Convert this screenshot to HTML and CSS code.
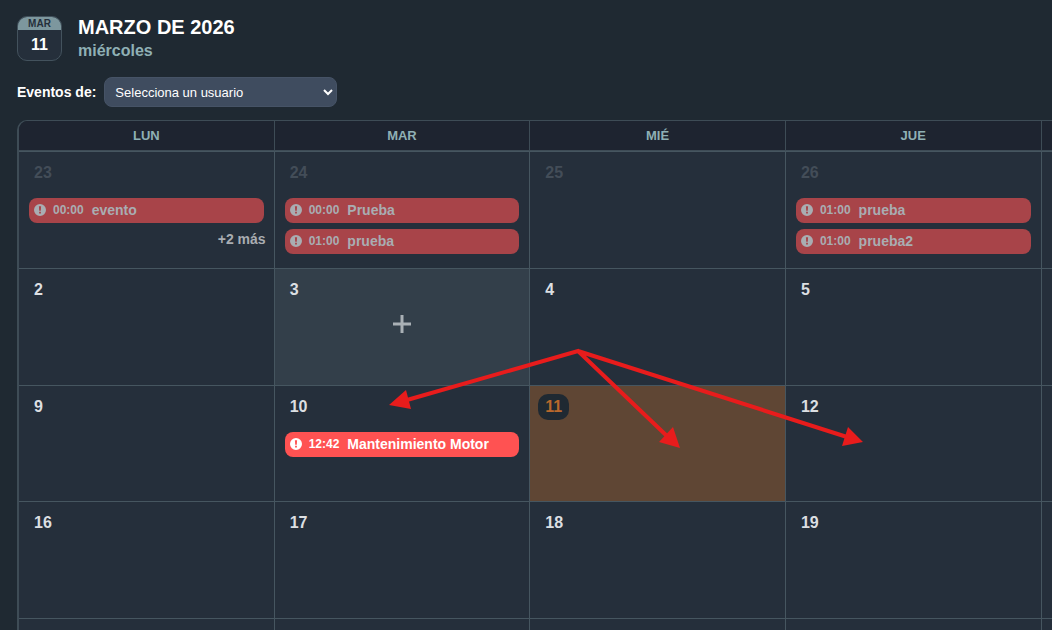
FILE: index.html
```
<!DOCTYPE html>
<html lang="es">
<head>
    <meta charset="UTF-8">
    <meta name="viewport" content="width=device-width, initial-scale=1.0">
    <title>Calendario de eventos</title>
    <link rel="stylesheet" href="styles.css">
</head>
<body>
    <svg class="sprite" aria-hidden="true">
        <symbol id="alert" viewBox="0 0 12 12">
            <path fill-rule="evenodd" d="M6 0a6 6 0 1 1 0 12A6 6 0 0 1 6 0zM4.9 2.2l.3 4.6h1.6l.3-4.6zM5.1 7.8v1.8h1.8V7.8z"/>
        </symbol>
    </svg>

    <header class="page-header">
        <div class="date-badge">
            <span class="badge-month">MAR</span>
            <span class="badge-day">11</span>
        </div>
        <div>
            <h1>MARZO DE 2026</h1>
            <p class="weekday">miércoles</p>
        </div>
    </header>

    <form class="filter">
        <label for="user">Eventos de:</label>
        <select id="user" name="user">
            <option value="">Selecciona un usuario</option>
        </select>
    </form>

    <div class="calendar">
        <table>
            <thead>
                <tr><th>LUN</th><th>MAR</th><th>MIÉ</th><th>JUE</th><th></th></tr>
            </thead>
            <tbody>
                <tr>
                    <td class="other-month">
                        <span class="day">23</span>
                        <button class="event"><svg><use href="#alert"/></svg><span class="event-time">00:00</span><span>evento</span></button>
                        <button class="more">+2 más</button>
                    </td>
                    <td class="other-month">
                        <span class="day">24</span>
                        <button class="event"><svg><use href="#alert"/></svg><span class="event-time">00:00</span><span>Prueba</span></button>
                        <button class="event"><svg><use href="#alert"/></svg><span class="event-time">01:00</span><span>prueba</span></button>
                    </td>
                    <td class="other-month"><span class="day">25</span></td>
                    <td class="other-month">
                        <span class="day">26</span>
                        <button class="event"><svg><use href="#alert"/></svg><span class="event-time">01:00</span><span>prueba</span></button>
                        <button class="event"><svg><use href="#alert"/></svg><span class="event-time">01:00</span><span>prueba2</span></button>
                    </td>
                    <td></td>
                </tr>
                <tr>
                    <td><span class="day">2</span></td>
                    <td class="active">
                        <span class="day">3</span>
                        <button class="add" aria-label="Añadir evento">
                            <svg viewBox="0 0 18 18"><path d="M9 0v18M0 9h18"/></svg>
                        </button>
                    </td>
                    <td><span class="day">4</span></td>
                    <td><span class="day">5</span></td>
                    <td></td>
                </tr>
                <tr>
                    <td><span class="day">9</span></td>
                    <td>
                        <span class="day">10</span>
                        <button class="event"><svg><use href="#alert"/></svg><span class="event-time">12:42</span><span>Mantenimiento Motor</span></button>
                    </td>
                    <td class="today"><span class="day">11</span></td>
                    <td><span class="day">12</span></td>
                    <td></td>
                </tr>
                <tr>
                    <td><span class="day">16</span></td>
                    <td><span class="day">17</span></td>
                    <td><span class="day">18</span></td>
                    <td><span class="day">19</span></td>
                    <td></td>
                </tr>
                <tr><td></td><td></td><td></td><td></td><td></td></tr>
            </tbody>
        </table>
    </div>

    <!-- Annotation arrows -->
    <svg class="arrows" viewBox="0 0 1052 630" aria-hidden="true">
        <path class="arrow-line" d="M407 400L578 351L668 437M578 351L847 437"/>
        <path class="arrow-head" d="M389 405l17-15 5 19zM680 448l-7-21-14 15zM863 442l-15-15-6 19z"/>
    </svg>
</body>
</html>
```
FILE: styles.css
```
* {
    box-sizing: border-box;
}

body {
    position: relative;
    margin: 0;
    padding: 16px 0 0 17px;
    height: 100vh;
    overflow: hidden;
    background: #1f2932;
    color: #fff;
    font-family: "Liberation Sans", Arial, sans-serif;
    font-size: 14px;
}

button {
    border: none;
    background: none;
    font: inherit;
    font-weight: bold;
    cursor: pointer;
}

.sprite {
    display: none;
}

/* Header */
.page-header {
    display: flex;
    align-items: flex-start;
    gap: 16px;
    height: 45px;
    font-weight: bold;
}

.date-badge {
    display: flex;
    flex-direction: column;
    width: 45px;
    height: 45px;
    border: 1px solid #43525d;
    border-radius: 10px;
    background: #252f3b;
    overflow: hidden;
    text-align: center;
}

.badge-month {
    background: #7d979e;
    color: #252f3b;
    font-size: 10px;
    line-height: 13px;
}

.badge-day {
    font-size: 16px;
    line-height: 30px;
}

h1 {
    margin: 0;
    font-size: 20px;
    line-height: 22px;
}

.weekday {
    margin: 0;
    color: #8fb0b5;
    font-size: 16px;
    line-height: 26px;
}

/* User filter */
.filter {
    display: flex;
    align-items: center;
    gap: 8px;
    margin: 16px 0 13px;
}

.filter label {
    font-weight: bold;
}

select {
    width: 233px;
    height: 30px;
    padding: 0 0 0 6px;
    border: 1px solid #465366;
    border-radius: 8px;
    background: #3f4c5f;
    color: #fff;
    font-family: inherit;
    font-size: 13px;
}

/* Calendar */
.calendar {
    width: 123vw;
    border: 1px solid #3e4c56;
    border-left-width: 2px;
    border-right: none;
    border-radius: 10px 0 0 0;
    overflow: hidden;
}

table {
    width: 121.5vw;
    table-layout: fixed;
    border-collapse: separate;
    border-spacing: 0;
}

th {
    height: 30px;
    padding: 0;
    border-right: 1px solid #3e4c56;
    border-bottom: 1px solid #3e4c56;
    background: #1e2430;
    color: #8fb0b5;
    font-size: 13px;
}

td {
    height: 18.5vh;
    padding: 8px;
    border-top: 1px solid #465660;
    border-right: 1px solid #465660;
    background: #252f3b;
    vertical-align: top;
}

.day {
    display: block;
    width: fit-content;
    margin-bottom: 12px;
    padding: 0 7px;
    border-radius: 10px;
    color: #dcdfe2;
    font-size: 16px;
    font-weight: bold;
    line-height: 26px;
}

.active {
    background: #333f4a;
}

.today {
    background: #5f4634;
}

.today .day {
    background: #1f2932;
    color: #b8682c;
}

.event {
    display: flex;
    align-items: center;
    width: calc(100% - 4px);
    height: 25px;
    margin: 0 2px 6px;
    padding: 0 5px 1px;
    border-radius: 8px;
    background: #ff5252;
    color: #fff;
}

.event svg {
    width: 12px;
    height: 12px;
    margin-right: 7px;
    fill: currentColor;
}

.event-time {
    margin-right: 8px;
    font-size: 12px;
}

.more {
    display: block;
    margin: 0 0 0 auto;
    padding: 2px 0;
    color: #fff;
}

.other-month .day {
    color: #434d58;
}

.other-month .event {
    background: #a84449;
    color: #a9adb2;
}

.other-month .more {
    color: #a9adb2;
}

.add {
    display: block;
    margin: 0 auto;
    padding: 0;
}

.add svg {
    display: block;
    width: 18px;
    height: 18px;
    stroke: #a9b0b5;
    stroke-width: 3;
}

.arrows {
    position: absolute;
    top: 0;
    left: 0;
    width: 1052px;
    height: 630px;
    pointer-events: none;
}

.arrow-line {
    fill: none;
    stroke: #e81c1c;
    stroke-width: 4;
}

.arrow-head {
    fill: #e81c1c;
}
```
